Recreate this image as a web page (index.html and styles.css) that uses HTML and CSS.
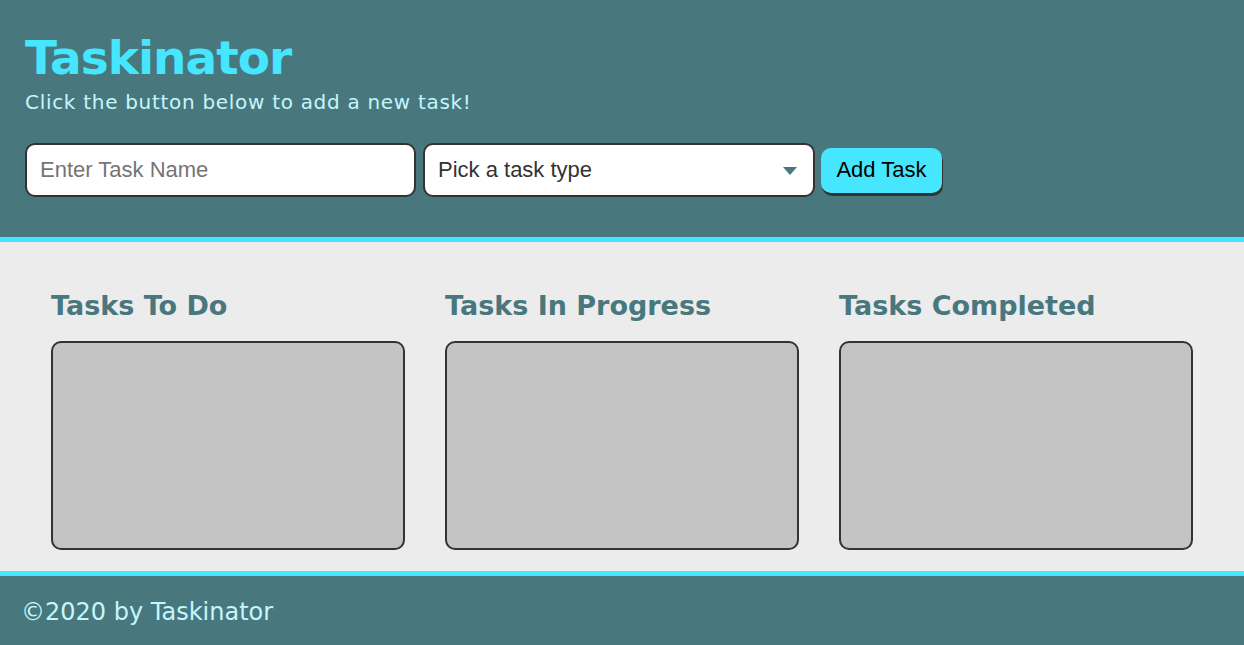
FILE: index.html
```html
<!DOCTYPE html>
<html lang="en">
<head>
<meta charset="UTF-8">
<title>Taskinator</title>
<link rel="stylesheet" href="styles.css">
</head>
<body>
<header class="page-header">
  <h1 class="page-title">Taskinator</h1>
  <p class="page-subtitle">Click the button below to add a new task!</p>
  <form class="task-form">
    <input class="text-input" type="text" placeholder="Enter Task Name">
    <div class="select-wrap">
      <span class="select-label">Pick a task type</span>
      <svg class="select-arrow" width="14" height="8" viewBox="0 0 14 8"><path d="M0 0H14L7 8Z" fill="#48787e"/></svg>
    </div>
    <button class="btn" type="button">Add Task</button>
  </form>
</header>
<main class="page-content">
  <section class="task-list-wrapper">
    <h2 class="list-title">Tasks To Do</h2>
    <div class="task-list"></div>
  </section>
  <section class="task-list-wrapper">
    <h2 class="list-title">Tasks In Progress</h2>
    <div class="task-list"></div>
  </section>
  <section class="task-list-wrapper">
    <h2 class="list-title">Tasks Completed</h2>
    <div class="task-list"></div>
  </section>
</main>
<footer class="page-footer">
  <p class="footer-text">&copy;2020 by Taskinator</p>
</footer>
</body>
</html>
```
FILE: styles.css
```css
* { box-sizing: border-box; }
html, body { margin: 0; padding: 0; }
body {
  font-family: "DejaVu Sans", Verdana, sans-serif;
  background: #ececec;
  height: 645px;
  display: flex;
  flex-direction: column;
}
.page-header {
  background: #48787e;
  padding: 30px 25px 40px;
  border-bottom: 5px solid #45e6fe;
}
.page-title {
  margin: 0;
  font-size: 47px;
  line-height: 56px;
  letter-spacing: -1px;
  color: #45e6fe;
  font-weight: bold;
}
.page-subtitle {
  margin: 4px 0 0;
  font-size: 20px;
  line-height: 24px;
  letter-spacing: 0.7px;
  color: #c4f6fc;
}
.task-form {
  margin-top: 29px;
  display: flex;
  align-items: center;
}
.text-input, .select-wrap {
  width: 391px;
  height: 54px;
  border: 2px solid #333;
  border-radius: 10px;
  background: #fff;
  font-family: "Liberation Sans", Arial, sans-serif;
  font-size: 22px;
  padding: 0 13px;
}
.text-input::placeholder { color: #757575; }
.select-wrap {
  margin-left: 7px;
  width: 392px;
  display: flex;
  align-items: center;
  justify-content: space-between;
  color: #333;
  padding-right: 16px;
}
.select-arrow { display: block; margin-top: 2px; }
.btn {
  margin-left: 6px;
  width: 121px;
  height: 45px;
  background: #45e6fe;
  border: none;
  border-radius: 10px;
  box-shadow: 1px 3px 0 #333;
  font-family: "Liberation Sans", Arial, sans-serif;
  font-size: 22px;
  color: #000;
  padding: 0;
}
.page-content {
  flex: 1;
  display: flex;
  gap: 40px;
  padding: 47px 51px 21px;
}
.task-list-wrapper {
  width: 354px;
  display: flex;
  flex-direction: column;
}
.list-title {
  margin: 0;
  font-size: 27px;
  line-height: 33px;
  color: #48787e;
  font-weight: bold;
}
.task-list {
  margin-top: 19px;
  height: 209px;
  background: #c4c4c4;
  border: 2px solid #333;
  border-radius: 10px;
}
.page-footer {
  background: #48787e;
  border-top: 5px solid #45e6fe;
  height: 74px;
  padding: 22px 21px 0;
}
.footer-text {
  margin: 0;
  font-size: 24px;
  line-height: 28px;
  color: #c4f6fc;
}
```
